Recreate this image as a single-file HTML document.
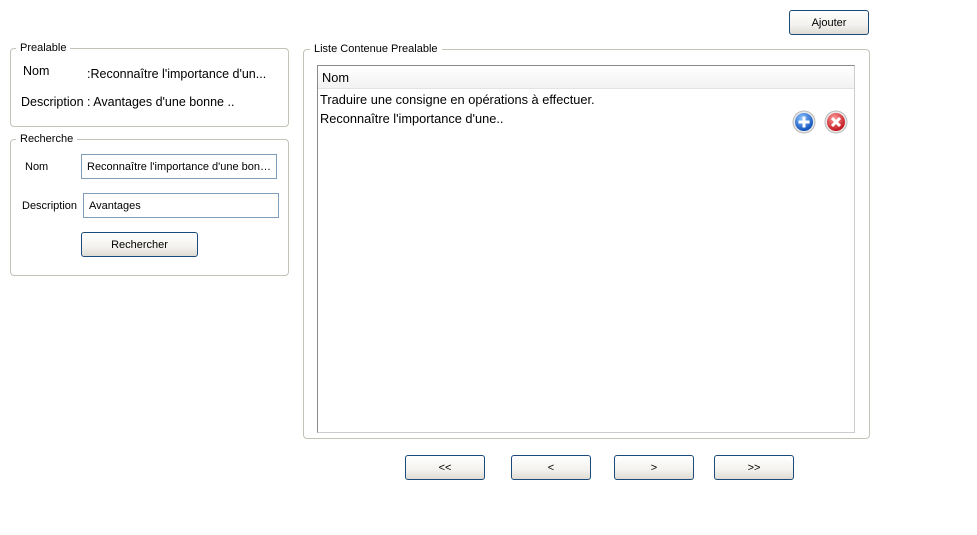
<!DOCTYPE html>
<html><head><style>
body{margin:0;width:977px;height:535px;background:#fff;font-family:"Liberation Sans",Arial,sans-serif;font-size:11px;color:#000;position:relative;overflow:hidden}
.a{position:absolute;white-space:nowrap}
.fs{position:absolute;border:1px solid #c5c2b8;border-radius:4px}
.lg{position:absolute;background:#fff;padding:0 4px;font-size:11px;top:-7px;left:5px}
.btn{position:absolute;border:1px solid #1c4a7a;border-radius:3px;background:linear-gradient(#fff,#f3f2ee 60%,#dedbd2);text-align:center;font-size:11px;box-sizing:border-box}
.in{position:absolute;border:1px solid #7f9db9;box-sizing:border-box;padding-left:5px;padding-right:1px;font-size:11px;background:#fff;white-space:nowrap;overflow:hidden;text-overflow:ellipsis}
.cs{font-family:"Comic Sans MS","Liberation Sans",sans-serif;font-size:12.5px}
.ar{font-family:"Liberation Sans",Arial,sans-serif;font-size:12.8px}
</style></head><body>
<div class="btn" style="left:789px;top:10px;width:80px;height:25px;line-height:25px">Ajouter</div>

<div class="fs" style="left:10px;top:48px;width:277px;height:77px"><span class="lg">Prealable</span></div>
<div class="a cs" style="left:23px;top:64px">Nom</div>
<div class="a cs" style="left:87px;top:67px">:Reconnaître l'importance d'un...</div>
<div class="a cs" style="left:21px;top:95px">Description : Avantages d'une bonne ..</div>

<div class="fs" style="left:10px;top:139px;width:277px;height:135px"><span class="lg">Recherche</span></div>
<div class="a" style="left:25px;top:161px">Nom</div>
<div class="in" style="left:81px;top:154px;width:196px;height:25px;line-height:25px">Reconnaître l'importance d'une bonne pratique</div>
<div class="a" style="left:22px;top:200px">Description</div>
<div class="in" style="left:83px;top:193px;width:196px;height:25px;line-height:25px">Avantages</div>
<div class="btn" style="left:81px;top:232px;width:117px;height:25px;line-height:25px">Rechercher</div>

<div class="fs" style="left:303px;top:49px;width:565px;height:388px"><span class="lg" style="left:6px">Liste Contenue Prealable</span></div>
<div class="a" style="left:317px;top:65px;width:536px;height:366px;border:1px solid #8a8a8a;border-right-color:#ccc;border-bottom-color:#ccc;background:#fff">
 <div style="height:22px;background:linear-gradient(#fff,#f2f2f2);border-bottom:1px solid #e3e3e3;line-height:24px;padding-left:4px" class="ar">Nom</div>
 <div class="ar" style="padding-left:2px;line-height:19px;margin-top:1px">Traduire une consigne en opérations à effectuer.<br>Reconnaître l'importance d'une..</div>
</div>
<svg class="a" style="left:792px;top:110px" width="26" height="26" viewBox="0 0 26 26">
<defs><radialGradient id="b" cx="40%" cy="30%" r="70%"><stop offset="0" stop-color="#8fc4ff"/><stop offset="1" stop-color="#0d4fb8"/></radialGradient>
<radialGradient id="r" cx="40%" cy="30%" r="70%"><stop offset="0" stop-color="#ff9a9a"/><stop offset="1" stop-color="#c1141c"/></radialGradient></defs>
<circle cx="12" cy="12" r="11" fill="#e8e8e8" stroke="#bbb"/><circle cx="12" cy="12" r="9" fill="url(#b)"/>
<path d="M12 6.5v11M6.5 12h11" stroke="#fff" stroke-width="3"/></svg>
<svg class="a" style="left:824px;top:110px" width="26" height="26" viewBox="0 0 26 26">
<circle cx="12" cy="12" r="11" fill="#e8e8e8" stroke="#bbb"/><circle cx="12" cy="12" r="9" fill="url(#r)"/>
<path d="M8 8l8 8M16 8l-8 8" stroke="#fff" stroke-width="3"/></svg>

<div class="btn" style="left:405px;top:455px;width:80px;height:25px;line-height:25px">&lt;&lt;</div>
<div class="btn" style="left:511px;top:455px;width:80px;height:25px;line-height:25px">&lt;</div>
<div class="btn" style="left:614px;top:455px;width:80px;height:25px;line-height:25px">&gt;</div>
<div class="btn" style="left:714px;top:455px;width:80px;height:25px;line-height:25px">&gt;&gt;</div>
</body></html>
